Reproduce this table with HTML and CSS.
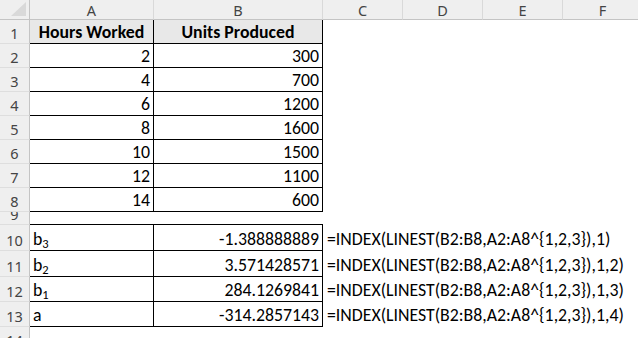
FILE: index.html
```html
<!DOCTYPE html>
<html>
<head>
<meta charset="utf-8">
<link rel="stylesheet" href="styles.css">
</head>
<body>
<div class="sheet">
  <div class="corner"><svg width="30" height="20" viewBox="0 0 30 20"><polygon points="26,2 26,16 11,16" fill="#d9d9d9"/></svg></div>
  <div class="hc">A</div><div class="hc">B</div><div class="hc">C</div><div class="hc">D</div><div class="hc">E</div><div class="hc">F</div>

  <div class="rh">1</div><div class="c bx th">Hours Worked</div><div class="c bx th">Units Produced</div><div class="c"></div><div class="c"></div><div class="c"></div><div class="c"></div>
  <div class="rh">2</div><div class="c bx num">2</div><div class="c bx num">300</div><div class="c"></div><div class="c"></div><div class="c"></div><div class="c"></div>
  <div class="rh">3</div><div class="c bx num">4</div><div class="c bx num">700</div><div class="c"></div><div class="c"></div><div class="c"></div><div class="c"></div>
  <div class="rh">4</div><div class="c bx num">6</div><div class="c bx num">1200</div><div class="c"></div><div class="c"></div><div class="c"></div><div class="c"></div>
  <div class="rh">5</div><div class="c bx num">8</div><div class="c bx num">1600</div><div class="c"></div><div class="c"></div><div class="c"></div><div class="c"></div>
  <div class="rh">6</div><div class="c bx num">10</div><div class="c bx num">1500</div><div class="c"></div><div class="c"></div><div class="c"></div><div class="c"></div>
  <div class="rh">7</div><div class="c bx num">12</div><div class="c bx num">1100</div><div class="c"></div><div class="c"></div><div class="c"></div><div class="c"></div>
  <div class="rh">8</div><div class="c bx num">14</div><div class="c bx num">600</div><div class="c"></div><div class="c"></div><div class="c"></div><div class="c"></div>

  <div class="rh">9</div><div class="c bb"></div><div class="c bb"></div><div class="c"></div><div class="c"></div><div class="c"></div><div class="c"></div>

  <div class="rh">10</div><div class="c bx txt"><span>b<sub>3</sub></span></div><div class="c bx num">-1.388888889</div><div class="c txt f">=INDEX(LINEST(B2:B8,A2:A8^{1,2,3}),1)</div><div class="c"></div><div class="c"></div><div class="c"></div>
  <div class="rh">11</div><div class="c bx txt"><span>b<sub>2</sub></span></div><div class="c bx num">3.571428571</div><div class="c txt f">=INDEX(LINEST(B2:B8,A2:A8^{1,2,3}),1,2)</div><div class="c"></div><div class="c"></div><div class="c"></div>
  <div class="rh">12</div><div class="c bx txt"><span>b<sub>1</sub></span></div><div class="c bx num">284.1269841</div><div class="c txt f">=INDEX(LINEST(B2:B8,A2:A8^{1,2,3}),1,3)</div><div class="c"></div><div class="c"></div><div class="c"></div>
  <div class="rh">13</div><div class="c bx txt"><span>a</span></div><div class="c bx num">-314.2857143</div><div class="c txt f">=INDEX(LINEST(B2:B8,A2:A8^{1,2,3}),1,4)</div><div class="c"></div><div class="c"></div><div class="c"></div>

  <div class="rh">14</div><div class="c"></div><div class="c"></div><div class="c"></div><div class="c"></div><div class="c"></div><div class="c"></div>
</div>
</body>
</html>
```

FILE: styles.css
```css
html, body {
  margin: 0;
  padding: 0;
  background: #ffffff;
  overflow: hidden;
}

.sheet {
  display: grid;
  grid-template-columns: 30px 124px 169px 80px 80px 80px 80px;
  grid-template-rows: 20px repeat(8, 24px) 13px 26px 26px 25px 25px 24px;
  width: 643px;
  font-family: Carlito, Lato, "Liberation Sans", sans-serif;
  font-size: 17.8px;
  color: #000;
}

.sheet > div {
  box-sizing: border-box;
  min-width: 0;
}

.corner {
  background: #efefef;
  border-right: 1px solid #c4c4c4;
  border-bottom: 1px solid #c4c4c4;
}

.corner svg {
  display: block;
}

.hc {
  background: #efefef;
  border-right: 1px solid #d9d9d9;
  border-bottom: 1px solid #c4c4c4;
  font-family: "Noto Sans", "Open Sans", sans-serif;
  font-size: 14.5px;
  color: #444;
  display: flex;
  align-items: center;
  justify-content: center;
  line-height: 1;
  padding-top: 1px;
}

.rh {
  background: #efefef;
  border-right: 1px solid #c4c4c4;
  border-bottom: 1px solid #dedede;
  font-family: "Noto Sans", "Open Sans", sans-serif;
  font-size: 14.5px;
  color: #444;
  display: flex;
  align-items: flex-end;
  justify-content: center;
  line-height: 20px;
  white-space: nowrap;
  overflow: hidden;
}

.c {
  display: flex;
  align-items: flex-end;
  padding: 0 3px 0 3px;
  line-height: 21px;
  white-space: nowrap;
}

.bx {
  border-right: 1px solid #000;
  border-bottom: 1px solid #000;
}

.bb {
  border-bottom: 1px solid #000;
}

.th {
  background: #e8e8e8;
  font-weight: bold;
  justify-content: center;
}

.num {
  justify-content: flex-end;
}

.txt {
  justify-content: flex-start;
}

.f {
  padding-left: 4px;
  padding-bottom: 1px;
}

sub {
  font-size: 12.5px;
  line-height: 0;
  position: relative;
  top: 3px;
  vertical-align: baseline;
}
```
